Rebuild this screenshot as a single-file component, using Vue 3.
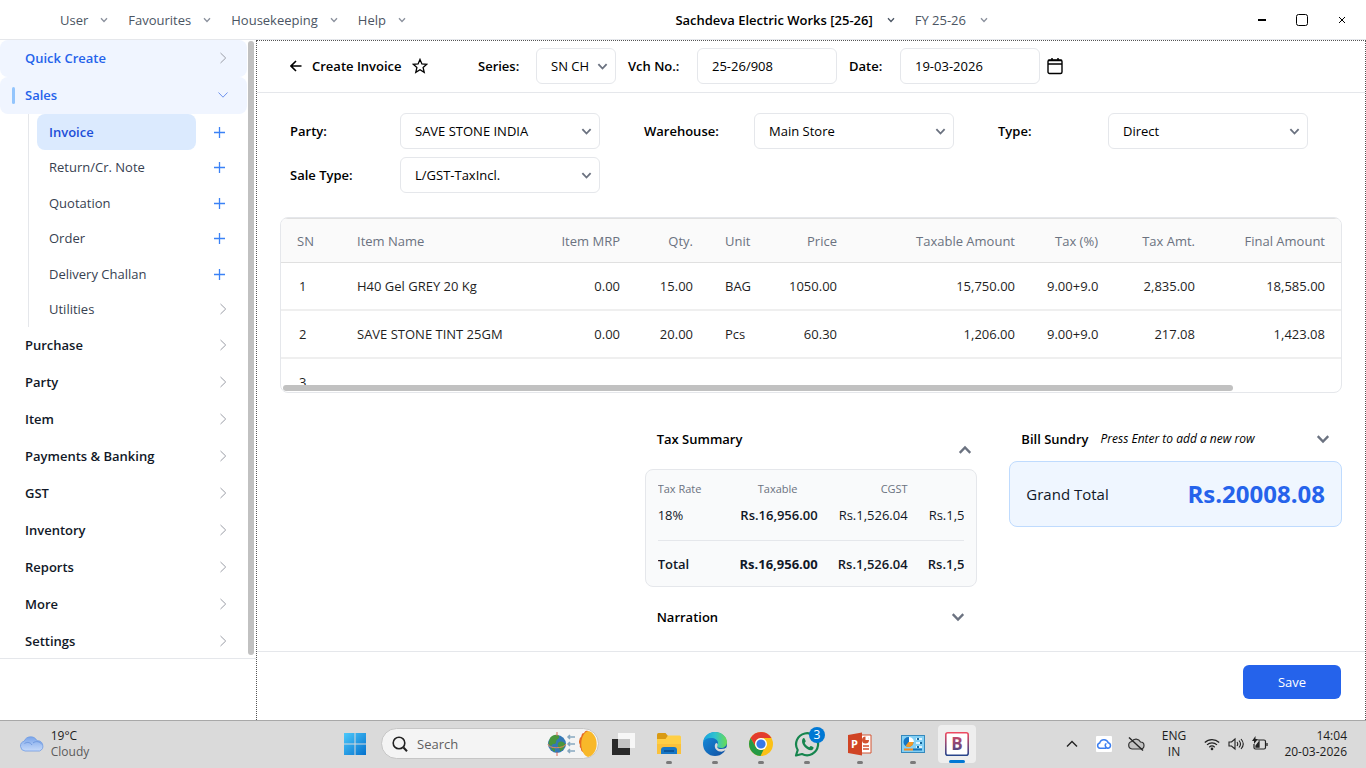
<template>
  <div class="desktop">
    <svg class="symbols" width="0" height="0" aria-hidden="true">
      <symbol id="chevron-down" viewBox="0 0 12 12">
        <path d="M1.5 3.5 6 8.2l4.500-4.700" fill="none" stroke="currentColor" />
      </symbol>
      <symbol id="chevron-up" viewBox="0 0 12 12">
        <path d="M1.500 8.500 6 3.800l4.500 4.700" fill="none" stroke="currentColor" />
      </symbol>
      <symbol id="chevron-right" viewBox="0 0 12 12">
        <path d="M3.500 1 8.700 6l-5.200 5" fill="none" stroke="currentColor" />
      </symbol>
    </svg>

    <header class="titlebar">
      <nav class="menu">
        <button v-for="item in menus" :key="item" type="button" class="menu-btn">
          {{ item }}
          <svg class="chev-small"><use href="#chevron-down" /></svg>
        </button>
      </nav>
      <div class="company">
        <button type="button" class="menu-btn company-btn">
          Sachdeva Electric Works [25-26]
          <svg class="chev-small"><use href="#chevron-down" /></svg>
        </button>
        <button type="button" class="menu-btn">
          FY 25-26
          <svg class="chev-small"><use href="#chevron-down" /></svg>
        </button>
      </div>
      <div class="window-btns">
        <button type="button" aria-label="Minimize">
          <svg width="14" height="14" viewBox="0 0 14 14"><path d="M3 7h8" stroke="#000" stroke-width="2" /></svg>
        </button>
        <button type="button" aria-label="Maximize">
          <svg width="14" height="14" viewBox="0 0 14 14">
            <rect x="1.500" y="1.500" width="11" height="11" rx="2" fill="none" stroke="#000" />
          </svg>
        </button>
        <button type="button" aria-label="Close">
          <svg width="14" height="14" viewBox="0 0 14 14"><path d="m4 4 6 6m0-6-6 6" stroke="#000" /></svg>
        </button>
      </div>
    </header>

    <div class="workspace">
      <aside class="sidebar">
        <div class="side-scroll">
          <nav class="side-nav">
            <button type="button" class="side-item highlighted">
              Quick Create
              <svg class="chev"><use href="#chevron-right" /></svg>
            </button>
            <button type="button" class="side-item highlighted opened">
              Sales
              <svg class="chev"><use href="#chevron-down" /></svg>
            </button>
            <div class="sub-menu">
              <div v-for="item in salesItems" :key="item" class="sub-row">
                <button
                  type="button"
                  class="sub-item"
                  :class="{ active: item === activeItem }"
                  @click="activeItem = item"
                >
                  {{ item }}
                </button>
                <svg v-if="item === 'Utilities'" class="chev"><use href="#chevron-right" /></svg>
                <button v-else type="button" class="add-btn" :aria-label="'Add ' + item">
                  <svg width="12" height="12" viewBox="0 0 12 12">
                    <path d="M6.500 1v11M1 6.500h11" stroke="#3b82f6" stroke-width="1.300" />
                  </svg>
                </button>
              </div>
            </div>
            <button v-for="item in sections" :key="item" type="button" class="side-item">
              {{ item }}
              <svg class="chev"><use href="#chevron-right" /></svg>
            </button>
          </nav>
          <div class="side-thumb"></div>
        </div>
      </aside>

      <main class="content">
        <div class="page-header">
          <button type="button" class="icon-btn" aria-label="Back">
            <svg width="12" height="12" viewBox="0 0 12 12">
              <path d="M6 1 1 6l5 5M1 6h10.500" fill="none" stroke="#000" stroke-width="1.600" />
            </svg>
          </button>
          <h1>Create Invoice</h1>
          <button type="button" class="icon-btn star" aria-label="Favourite">
            <svg width="16" height="16" viewBox="0 0 16 16">
              <path
                d="m8 1.400 1.900 4.500 4.900.4-3.700 3.200 1.100 4.800L8 11.800l-4.200 2.500 1.100-4.800L1.200 6.300l4.900-.4z"
                fill="none"
                stroke="#000"
                stroke-width="1.300"
              />
            </svg>
          </button>
          <label for="series" class="series-label">Series:</label>
          <div class="select-box series-box">
            <select id="series" v-model="series">
              <option>SN CH</option>
            </select>
            <svg class="chev-select"><use href="#chevron-down" /></svg>
          </div>
          <label for="vch" class="vch-label">Vch No.:</label>
          <input id="vch" v-model="vchNo" type="text" />
          <label for="date" class="date-label">Date:</label>
          <input id="date" v-model="date" type="text" />
          <button type="button" class="icon-btn calendar" aria-label="Pick date">
            <svg width="16" height="18" viewBox="0 0 16 18">
              <rect x="1" y="3" width="14" height="13.500" rx="1.500" fill="none" stroke="#000" stroke-width="1.400" />
              <path d="M1 3.500h14M1 7h14M5 1v3M11 1v3" stroke="#000" stroke-width="1.500" />
            </svg>
          </button>
        </div>

        <div class="page-body">
          <div class="form-grid">
            <div v-for="field in fields" :key="field.id" class="field">
              <label :for="field.id">{{ field.label }}</label>
              <div class="select-box">
                <select :id="field.id" v-model="field.value">
                  <option>{{ field.value }}</option>
                </select>
                <svg class="chev-select"><use href="#chevron-down" /></svg>
              </div>
            </div>
          </div>

          <div class="items-box">
            <div class="items-scroll">
              <table class="items">
                <colgroup>
                  <col v-for="col in columns" :key="col.key" :style="{ width: col.width }" />
                </colgroup>
                <thead>
                  <tr>
                    <th v-for="col in columns" :key="col.key" :class="col.align">{{ col.title }}</th>
                  </tr>
                </thead>
                <tbody>
                  <tr v-for="row in rows" :key="row.sn">
                    <td v-for="col in columns" :key="col.key" :class="[col.align, col.key]">{{ row[col.key] }}</td>
                  </tr>
                </tbody>
              </table>
            </div>
            <div class="items-track"><div class="items-thumb"></div></div>
          </div>

          <div class="summary-grid">
            <div></div>
            <section>
              <div class="section-head tax-head">
                <h2>Tax Summary</h2>
                <button type="button" class="icon-btn" aria-label="Collapse tax summary">
                  <svg class="chev-big"><use href="#chevron-up" /></svg>
                </button>
              </div>
              <div class="tax-card">
                <div class="tax-clip">
                  <table class="tax">
                    <thead>
                      <tr>
                        <th>Tax Rate</th>
                        <th class="center">Taxable</th>
                        <th class="right">CGST</th>
                        <th></th>
                      </tr>
                    </thead>
                    <tbody>
                      <tr>
                        <td>18%</td>
                        <td><span class="amount medium">Rs.16,956.00</span></td>
                        <td><span class="amount">Rs.1,526.04</span></td>
                        <td><span class="amount">Rs.1,526.04</span></td>
                      </tr>
                    </tbody>
                    <tfoot>
                      <tr>
                        <td>Total</td>
                        <td><span class="amount strong">Rs.16,956.00</span></td>
                        <td><span class="amount">Rs.1,526.04</span></td>
                        <td><span class="amount">Rs.1,526.04</span></td>
                      </tr>
                    </tfoot>
                  </table>
                </div>
              </div>
              <div class="section-head narration-head">
                <h2>Narration</h2>
                <button type="button" class="icon-btn" aria-label="Expand narration">
                  <svg class="chev-big"><use href="#chevron-down" /></svg>
                </button>
              </div>
            </section>
            <section>
              <div class="section-head sundry-head">
                <h2>Bill Sundry</h2>
                <em>Press Enter to add a new row</em>
                <button type="button" class="icon-btn" aria-label="Expand bill sundry">
                  <svg class="chev-big"><use href="#chevron-down" /></svg>
                </button>
              </div>
              <div class="grand-total">
                <span>Grand Total</span>
                <strong>Rs.20008.08</strong>
              </div>
            </section>
          </div>
        </div>

        <footer class="page-footer">
          <button type="button" class="save-btn">Save</button>
        </footer>
      </main>
    </div>

    <footer class="taskbar">
      <button type="button" class="weather">
        <svg width="26" height="20" viewBox="0 0 26 20">
          <defs>
            <linearGradient id="cloud" x1="0" y1="0" x2="0" y2="1">
              <stop offset="0" stop-color="#7ba5ea" />
              <stop offset="1" stop-color="#c6dafa" />
            </linearGradient>
          </defs>
          <path
            d="M6 17a5 5 0 0 1-.8-9.800A7 7 0 0 1 18 6.800 5.300 5.300 0 0 1 20.500 17z"
            fill="url(#cloud)"
            stroke="#6f9ae2"
            stroke-width=".8"
          />
          <path d="M5.500 9.500c3-2 6-1 7.500 1.500M14 9c3-2.500 7-1.500 9 1.500" fill="none" stroke="#7099df" />
        </svg>
        <span class="weather-text">
          <span>19°C</span>
          <span class="muted">Cloudy</span>
        </span>
      </button>

      <div class="task-apps">
        <button type="button" class="start" aria-label="Start">
          <svg width="24" height="24" viewBox="0 0 24 24">
            <defs>
              <linearGradient id="win" x1="0" y1="0" x2="1" y2="1">
                <stop offset="0" stop-color="#4cc9fb" />
                <stop offset="1" stop-color="#0471cd" />
              </linearGradient>
            </defs>
            <path d="M1 1h10.500v10.500H1zM12.500 1H23v10.500H12.500zM1 12.500h10.500V23H1zM12.500 12.500H23V23H12.500z" fill="url(#win)" />
          </svg>
        </button>

        <div class="search">
          <svg width="16" height="16" viewBox="0 0 16 16">
            <path d="M11.500 11.500 15 15.300" stroke="#222" stroke-width="2" />
            <circle cx="7" cy="7" r="5.800" fill="none" stroke="#222" stroke-width="1.600" />
          </svg>
          <input type="text" placeholder="Search" aria-label="Search" />
          <svg width="52" height="28" viewBox="0 0 52 28">
            <circle cx="11" cy="14" r="9" fill="#3478b5" />
            <path
              d="M4 8c3-4 8-4 9-2 1 3-3 3-3 6s-3 1-4 3-3 0-3.500-2zM12 13c3-3 6-1 7 1-1 5-3 7-5 7 0-3-3-4-2-8zM5 17l4 2v3c-2-1-4-3-4-5z"
              fill="#4a963d"
            />
            <path d="M2 14c0 5 16 5 18 0" fill="none" stroke="#e98955" />
            <path d="M11 2v4M11 22v4" stroke="#d96b5b" />
            <path
              d="M22 7h7M22 14h7M22 21h7M24 5l-2 2 2 2M24 12l-2 2 2 2M24 19l-2 2 2 2"
              fill="none"
              stroke="#87a8c0"
              stroke-width="1.500"
            />
            <path
              d="M42 1c-3-1-3 1-4 2-3 0-2 3-3 4-2 1-1 3-2 4 0 2 0 2 1 4-1 2 1 3 1 4 0 3 2 2 3 4 1 2 2 3 5 3z"
              fill="#e56a22"
            />
            <path d="M42 1c11 2 12 23 0 26-9-3-9-23 0-26z" fill="#f8b829" />
          </svg>
        </div>

        <button type="button" class="app" aria-label="Task view">
          <svg width="24" height="24" viewBox="0 0 24 24">
            <path d="M1 7h18v16H1z" fill="#292929" />
            <path d="M7 1h17v15H7z" fill="#f7f7f7" />
            <path d="M7 7h12v9H7z" fill="#c4c4c4" />
          </svg>
        </button>
        <button type="button" class="app running" aria-label="File Explorer">
          <svg width="26" height="26" viewBox="0 0 26 26">
            <path d="M1 3.500Q1 2 2.500 2h7L12 5v3H1z" fill="#d99a13" />
            <path d="M1 8h8.500L12 4.500h11.500Q25 4.500 25 6v17H1z" fill="#ffcf45" />
            <path d="M1 13h24v10H1z" fill="#fac13b" />
            <path d="M5 23v-4q0-3 3-3h10q3 0 3 3v4z" fill="#1676c5" />
            <path d="M8 20h10" stroke="#0b559a" stroke-width="2" />
          </svg>
        </button>
        <button type="button" class="app running" aria-label="Edge">
          <svg width="26" height="26" viewBox="0 0 26 26">
            <defs>
              <linearGradient id="edge-top" x1="0" y1="0" x2="1" y2="0">
                <stop offset="0" stop-color="#16a3df" />
                <stop offset=".5" stop-color="#2fc2cf" />
                <stop offset="1" stop-color="#69dc50" />
              </linearGradient>
              <linearGradient id="edge-low" x1="0" y1="0" x2="1" y2="1">
                <stop offset="0" stop-color="#1590df" />
                <stop offset="1" stop-color="#114c9e" />
              </linearGradient>
            </defs>
            <circle cx="13" cy="13" r="12" fill="url(#edge-low)" />
            <path
              d="M1.200 11C2 5 7 1 13 1c7 0 12 5 12 10 0 4-3 6-6 6-2 0-4-1-4-2s1-1 1-3c0-3-3-5-7-5-4 0-6.500 1.500-7.800 4z"
              fill="url(#edge-top)"
            />
            <path d="M14 12c1.500 0 2 1 1.500 2.500S15 18 19 18c3 0 5-1 6-2l-1 3c-2 1-4 2-6 1.500-4-.5-7-5-4-8.500z" fill="#dadada" />
          </svg>
        </button>
        <button type="button" class="app running" aria-label="Chrome">
          <svg width="26" height="26" viewBox="0 0 26 26">
            <circle cx="13" cy="13" r="12" fill="#fbc116" />
            <path d="M2.600 7A12 12 0 0 1 23.400 7H13a6 6 0 0 0-5.200 9z" fill="#e33b2e" />
            <path d="M2.600 7 7.800 16a6 6 0 0 0 8 2.300L12.500 25A12 12 0 0 1 2.600 7z" fill="#259a45" />
            <circle cx="13" cy="13" r="6" fill="#fff" />
            <circle cx="13" cy="13" r="4.600" fill="#3879e8" />
          </svg>
        </button>
        <button type="button" class="app running" aria-label="WhatsApp">
          <svg width="26" height="26" viewBox="0 0 26 26">
            <path
              d="M2 24.500 3.700 19A11 11 0 1 1 8 23z"
              fill="none"
              stroke="#16854e"
              stroke-width="2.200"
              stroke-linejoin="round"
            />
            <path
              d="M8.500 8c1-1.500 2-1 2.300 0l.9 2c.2.800-.7 1.500-1 2 1 2 2.500 3.500 4.500 4.200.8-.4 1-1.400 1.800-1.200l2.200 1c1 .7 0 2.500-1.200 3C13.500 20.500 6 13 8.500 8z"
              fill="#16854e"
            />
          </svg>
          <span class="badge">3</span>
        </button>
        <button type="button" class="app wide running" aria-label="PowerPoint">
          <svg width="26" height="26" viewBox="0 0 26 26">
            <path d="M13 4h11v18H13z" fill="#fff" stroke="#d35230" />
            <circle cx="18.500" cy="9" r="3.500" fill="#d35230" />
            <path d="M18.500 9V5A4 4 0 0 1 22 9z" fill="#fff" />
            <path d="M16 15h6M16 18h6" stroke="#d35230" stroke-width="1.500" />
            <path d="M1 4 15 1.500v23L1 22z" fill="#d04424" />
            <text x="4" y="17" class="ppt-letter">P</text>
          </svg>
        </button>
        <button type="button" class="app running" aria-label="Control Panel">
          <svg width="26" height="26" viewBox="0 0 26 26">
            <rect x="1.500" y="4.500" width="23" height="17" fill="#83d0f5" stroke="#3689bc" />
            <circle cx="8.500" cy="11" r="5" fill="#1576c4" />
            <path d="M9 11V6a5 5 0 0 1 5 5z" fill="#fff" />
            <path d="M8.500 11h5a5 5 0 0 1-8 4z" fill="#f39a26" />
            <path d="M16 8h6M16 12h6M16 16h6" stroke="#fff" stroke-width="1.500" />
            <path d="M18 7v2M21 11v2M18 15v2" stroke="#16679c" stroke-width="2" />
            <path d="M4 18.500h9" stroke="#f58b20" stroke-width="2" />
            <path d="M13 18.500h9" stroke="#1674b8" stroke-width="2" />
          </svg>
        </button>
        <button type="button" class="app current" aria-label="Billing">
          <svg width="26" height="26" viewBox="0 0 26 26">
            <defs>
              <linearGradient id="brand" x1="0" y1="0" x2="0" y2="1">
                <stop offset="0" stop-color="#ee4a60" />
                <stop offset="1" stop-color="#28458c" />
              </linearGradient>
            </defs>
            <rect x="1.800" y="1.800" width="22.400" height="22.400" rx="2" fill="#fff" stroke="url(#brand)" stroke-width="1.600" />
            <text x="13" y="19" text-anchor="middle" class="brand-letter" fill="url(#brand)">B</text>
          </svg>
        </button>
      </div>

      <div class="tray">
        <button type="button" class="tray-btn" aria-label="Show hidden icons">
          <svg width="12" height="12" viewBox="0 0 12 12">
            <path d="m1 8.500 5-5 5 5" fill="none" stroke="#222" stroke-width="1.400" />
          </svg>
        </button>
        <button type="button" class="tray-btn" aria-label="Cloud backup">
          <svg width="16" height="16" viewBox="0 0 16 16">
            <rect width="16" height="16" rx="1" fill="#fff" />
            <path
              d="M10 12.300H4a2.700 2.700 0 0 1-.3-5.300 4.400 4.400 0 0 1 8.500-.2 2.800 2.800 0 0 1 0 5.500c-2 0-2.700-1.300-3-3 0-1 .5-1.500 1.300-1.500"
              fill="none"
              stroke="#3d7ff0"
              stroke-width="1.500"
            />
          </svg>
        </button>
        <button type="button" class="tray-btn" aria-label="OneDrive">
          <svg width="18" height="16" viewBox="0 0 18 16">
            <path d="M5 13a3.800 3.800 0 0 1-.2-7.500A5 5 0 0 1 13.500 6a3.500 3.500 0 0 1 0 7z" fill="#c2c2c2" stroke="#333" stroke-width="1.200" />
            <path d="m2 1.500 14 13" stroke="#222" stroke-width="1.400" />
          </svg>
        </button>
        <button type="button" class="lang"><span>ENG</span><span>IN</span></button>
        <button type="button" class="quick" aria-label="Network, volume and battery">
          <svg width="16" height="16" viewBox="0 0 16 16">
            <path
              d="M.8 6.500a10.300 10.300 0 0 1 14.400 0M3 8.900a7.200 7.200 0 0 1 10 0M5.300 11.200a4 4 0 0 1 5.400 0"
              fill="none"
              stroke="#222"
              stroke-width="1.200"
            />
            <circle cx="8" cy="12.900" r="1.300" fill="#222" />
          </svg>
          <svg width="16" height="16" viewBox="0 0 16 16">
            <path
              d="M1 6h2.500L7 3v10l-3.500-3H1zM9 6q1.500 2 0 4M11 4.500q3 3.500 0 7M13 3q4.500 5 0 10"
              fill="none"
              stroke="#222"
              stroke-width="1.100"
            />
          </svg>
          <svg width="16" height="16" viewBox="0 0 16 16">
            <path d="M5.500 4H12q1.500 0 1.500 1.500v6Q13.500 13 12 13H3.500Q2 13 2 11.500V8" fill="none" stroke="#222" stroke-width="1.200" />
            <path d="M4 10l3-4v5H4zM15 7v3" fill="#222" stroke="#222" stroke-width="1.300" />
            <path d="M3.500 0 0 5h2v3l4-5H3.500z" fill="#222" />
          </svg>
        </button>
        <button type="button" class="clock"><span>14:04</span><span>20-03-2026</span></button>
      </div>
    </footer>
  </div>
</template>

<script setup>
import { ref } from 'vue';

const menus = ['User', 'Favourites', 'Housekeeping', 'Help'];
const salesItems = ['Invoice', 'Return/Cr. Note', 'Quotation', 'Order', 'Delivery Challan', 'Utilities'];
const sections = [
  'Purchase',
  'Party',
  'Item',
  'Payments & Banking',
  'GST',
  'Inventory',
  'Reports',
  'More',
  'Settings',
];

const activeItem = ref('Invoice');
const series = ref('SN CH');
const vchNo = ref('25-26/908');
const date = ref('19-03-2026');

const fields = ref([
  { id: 'party', label: 'Party:', value: 'SAVE STONE INDIA' },
  { id: 'warehouse', label: 'Warehouse:', value: 'Main Store' },
  { id: 'type', label: 'Type:', value: 'Direct' },
  { id: 'sale-type', label: 'Sale Type:', value: 'L/GST-TaxIncl.' },
]);

const columns = [
  { key: 'sn', title: 'SN', width: '60px', align: 'left' },
  { key: 'name', title: 'Item Name', width: 'auto', align: 'left' },
  { key: 'mrp', title: 'Item MRP', width: '100px', align: 'right' },
  { key: 'qty', title: 'Qty.', width: '73px', align: 'right' },
  { key: 'unit', title: 'Unit', width: '56px', align: 'left' },
  { key: 'price', title: 'Price', width: '88px', align: 'right' },
  { key: 'taxable', title: 'Taxable Amount', width: '178px', align: 'right' },
  { key: 'tax', title: 'Tax (%)', width: '83px', align: 'right' },
  { key: 'taxAmt', title: 'Tax Amt.', width: '97px', align: 'right' },
  { key: 'final', title: 'Final Amount', width: '130px', align: 'right' },
];

const rows = ref([
  {
    sn: 1,
    name: 'H40 Gel GREY 20 Kg',
    mrp: '0.00',
    qty: '15.00',
    unit: 'BAG',
    price: '1050.00',
    taxable: '15,750.00',
    tax: '9.00+9.0',
    taxAmt: '2,835.00',
    final: '18,585.00',
  },
  {
    sn: 2,
    name: 'SAVE STONE TINT 25GM',
    mrp: '0.00',
    qty: '20.00',
    unit: 'Pcs',
    price: '60.30',
    taxable: '1,206.00',
    tax: '9.00+9.0',
    taxAmt: '217.08',
    final: '1,423.08',
  },
  { sn: 3 },
]);
</script>

<style>
body {
  margin: 0;
  background: #fff;
}
</style>

<style scoped>
.desktop {
  display: flex;
  flex-direction: column;
  height: 100vh;
  overflow: hidden;
  font-family: 'Open Sans', 'Noto Sans', sans-serif;
  font-size: 13px;
  line-height: 18px;
  color: #000;
}

.desktop * {
  box-sizing: border-box;
}

.symbols {
  position: absolute;
}

button,
input,
select {
  font: inherit;
  color: inherit;
}

button {
  padding: 0;
  border: 0;
  background: none;
  cursor: pointer;
}

svg {
  flex: none;
}

h1,
h2 {
  margin: 0;
  font-size: 13px;
  font-weight: 600;
}

/* title bar */
.titlebar {
  display: flex;
  align-items: center;
  flex: none;
  height: 40px;
  padding: 0 4px 0 60px;
  border-bottom: 1px solid #e5e7eb;
}

.menu,
.company {
  display: flex;
  gap: 20px;
}

.menu-btn {
  display: flex;
  align-items: center;
  gap: 12px;
  color: #4b5563;
  white-space: nowrap;
}

.chev-small {
  width: 8px;
  height: 8px;
  color: #8b919d;
  stroke-width: 2px;
}

.company {
  margin-left: auto;
  margin-right: 254px;
}

.company .menu-btn {
  gap: 14px;
}

.menu-btn.company-btn {
  color: #000;
  font-weight: 600;
}

.company-btn .chev-small {
  color: #4b5563;
}

.window-btns {
  display: flex;
}

.window-btns button {
  display: flex;
  align-items: center;
  justify-content: center;
  width: 40px;
  height: 38px;
}

/* sidebar */
.workspace {
  display: flex;
  flex: 1;
  min-height: 0;
}

.sidebar {
  flex: none;
  width: 256px;
  padding-bottom: 61px;
}

.side-scroll {
  display: flex;
  height: 100%;
  overflow: hidden;
  border-bottom: 1px solid #e5e7eb;
}

.side-nav {
  width: 247px;
}

.side-thumb {
  width: 6px;
  margin: 1px 0 3px 1px;
  border-radius: 3px;
  background: #c1c1c1;
}

.side-item {
  position: relative;
  display: flex;
  align-items: center;
  justify-content: space-between;
  width: 100%;
  height: 37px;
  padding: 0 18px 2px 25px;
  border-radius: 8px;
  color: #111827;
  font-weight: 600;
}

.highlighted {
  background: #f0f5ff;
  color: #2563eb;
}

.opened::before {
  content: '';
  position: absolute;
  left: 12px;
  top: 10px;
  width: 3px;
  height: 17px;
  border-radius: 2px;
  background: #93c5fd;
}

.chev {
  width: 12px;
  height: 12px;
  color: #9a9da6;
}

.opened .chev {
  color: #6f93ee;
}

.sub-menu {
  display: grid;
  grid-auto-rows: 1fr;
  height: 213px;
  margin-left: 28px;
  padding: 0 18px 0 8px;
  border-left: 1px solid #e5e7eb;
}

.sub-row {
  display: flex;
  align-items: center;
  justify-content: space-between;
}

.sub-item {
  width: 159px;
  height: 100%;
  padding: 0 12px;
  border-radius: 8px;
  text-align: left;
  color: #374151;
}

.sub-item.active {
  background: #dbeafe;
  color: #1d4ed8;
  font-weight: 600;
}

.add-btn {
  display: flex;
  width: 16px;
}

/* invoice page */
.content {
  display: flex;
  flex-direction: column;
  flex: 1;
  min-width: 0;
  border: 1px dotted #555;
  border-bottom: 0;
}

.page-header {
  display: flex;
  align-items: center;
  flex: none;
  height: 52px;
  padding: 0 0 2px 33px;
  border-bottom: 1px solid #e5e7eb;
}

label {
  font-weight: 600;
  white-space: nowrap;
}

.icon-btn {
  display: flex;
}

.page-header h1 {
  width: 100px;
  margin-left: 10px;
  white-space: nowrap;
}

.series-label {
  width: 58px;
  margin-left: 50px;
}

.vch-label {
  width: 69px;
  margin-left: 12px;
}

.date-label {
  width: 51px;
  margin-left: 12px;
}

.calendar {
  margin-left: 7px;
}

input,
select {
  height: 36px;
  padding: 0 14px;
  border: 1px solid #e5e7eb;
  border-radius: 6px;
  background: #fff;
  outline: 0;
}

.page-header input {
  width: 140px;
}

.select-box {
  position: relative;
  width: 200px;
}

.series-box {
  width: 80px;
}

.select-box select {
  width: 100%;
  appearance: none;
}

.chev-select {
  position: absolute;
  right: 8px;
  top: 13px;
  width: 11px;
  height: 11px;
  color: #6b7280;
  stroke-width: 2px;
  pointer-events: none;
}

.page-body {
  flex: 1;
  min-height: 0;
  padding: 20px 23px 0;
}

.form-grid {
  display: grid;
  grid-template-columns: repeat(3, 1fr);
  row-gap: 8px;
  padding-left: 10px;
  margin-right: -10px;
}

.field {
  display: flex;
  align-items: center;
}

.field label {
  width: 110px;
}

/* item rows */
.items-box {
  margin-top: 24px;
  height: 176px;
  overflow: hidden;
  border: 1px solid #e5e7eb;
  border-radius: 8px;
}

.items-scroll {
  height: 167px;
  overflow: hidden;
}

.items {
  width: 100%;
  table-layout: fixed;
  border-collapse: separate;
  border-spacing: 0;
}

.items th,
.items td {
  height: 48px;
  padding: 0 16px;
  overflow: hidden;
  white-space: nowrap;
  border-bottom: 2px solid #efefef;
  color: #1f1f1f;
}

.items th {
  height: 45px;
  border-top: 1px solid #e0e0e0;
  border-bottom: 1px solid #e0e0e0;
  background: #fafafa;
  color: #6b7280;
  font-weight: 500;
}

.items td.sn {
  padding-left: 18px;
}

.left {
  text-align: left;
}

.center {
  text-align: center;
}

.right {
  text-align: right;
}

.items-thumb {
  width: 950px;
  max-width: 90%;
  height: 6px;
  margin-left: 2px;
  border-radius: 3px;
  background: #c1c1c1;
}

/* totals */
.summary-grid {
  display: grid;
  grid-template-columns: repeat(3, minmax(0, 1fr));
  gap: 32px;
  margin-top: 28px;
}

.section-head {
  display: flex;
  align-items: center;
  padding: 0 12px;
}

.section-head .icon-btn {
  margin-left: auto;
}

.tax-head {
  align-items: flex-start;
  height: 48px;
  padding: 9px 5px 0 12px;
}

.tax-head .icon-btn {
  padding-top: 13px;
}

.chev-big {
  width: 14px;
  height: 14px;
  color: #6b7280;
  stroke-width: 2px;
}

.tax-card {
  height: 118px;
  padding: 10px 12px;
  border: 1px solid #e5e7eb;
  border-radius: 8px;
  background: #f9fafb;
}

.tax-clip {
  overflow: hidden;
}

.tax {
  width: 340px;
  table-layout: fixed;
  border-collapse: collapse;
}

.tax th {
  height: 18px;
  padding: 0;
  font-size: 11px;
  font-weight: 400;
  color: #6b7280;
}

.tax th:first-child,
.tax td:first-child {
  width: 80px;
  text-align: left;
}

.tax th:nth-child(2) {
  width: 80px;
}

.tax td {
  height: 42px;
  padding: 0 0 8px;
  color: #111827;
}

.tax tfoot td {
  height: 34px;
  padding: 14px 0 0;
  border-top: 1px solid #e5e7eb;
  font-weight: 600;
}

.amount {
  display: flex;
  justify-content: flex-end;
  overflow: hidden;
}

.amount.medium {
  font-weight: 600;
}

.tax .amount.strong {
  font-weight: 700;
}

.narration-head {
  height: 60px;
}

.sundry-head {
  height: 40px;
  gap: 12px;
  padding-bottom: 4px;
}

.sundry-head h2 {
  white-space: nowrap;
}

.sundry-head em {
  font-size: 12px;
  white-space: nowrap;
}

.grand-total {
  display: flex;
  align-items: center;
  justify-content: space-between;
  height: 66px;
  padding: 0 16px;
  border: 1px solid #bfdbfe;
  border-radius: 8px;
  background: #eff6ff;
  color: #111827;
  font-size: 15px;
  font-weight: 500;
}

.grand-total strong {
  color: #2563eb;
  font-size: 24px;
}

.page-footer {
  display: flex;
  justify-content: flex-end;
  flex: none;
  height: 69px;
  padding: 13px 24px 0;
  border-top: 1px solid #e5e7eb;
}

.save-btn {
  width: 98px;
  height: 34px;
  border-radius: 6px;
  background: #2563eb;
  color: #fff;
  font-weight: 500;
}

/* taskbar */
.taskbar {
  display: flex;
  align-items: center;
  flex: none;
  height: 48px;
  padding: 0 19px 2px 18px;
  border-top: 1px solid #a8a8a8;
  background: #dadada;
  font-size: 12px;
  line-height: 16px;
  color: #1c1c1c;
}

.taskbar button {
  display: flex;
  align-items: center;
  justify-content: center;
}

.weather {
  gap: 6px;
  width: 72px;
}

.weather-text {
  display: flex;
  flex-direction: column;
  text-align: left;
}

.muted {
  color: #5b5b5b;
}

.task-apps {
  display: flex;
  align-items: center;
  margin-left: 246px;
}

.start {
  width: 38px;
}

.search {
  display: flex;
  align-items: center;
  width: 218px;
  height: 31px;
  margin-left: 7px;
  margin-right: 1px;
  padding: 0 0 0 10px;
  border: 1px solid #c6c6c6;
  border-radius: 16px;
  background: #f4f4f4;
}

.search input {
  flex: 1;
  min-width: 0;
  height: 28px;
  padding: 0 9px;
  border: 0;
  background: none;
  font-size: 13px;
}

.search input::placeholder {
  color: #5f5f5f;
}

.app {
  position: relative;
  width: 46px;
  height: 45px;
}

.app.wide {
  width: 60px;
}

.app.running::after,
.app.current::after {
  content: '';
  position: absolute;
  left: 50%;
  bottom: 2px;
  width: 6px;
  height: 3px;
  margin-left: -3px;
  border-radius: 2px;
  background: #7a7a7a;
}

.taskbar .app.current {
  width: 38px;
  height: 38px;
  margin-left: 2px;
  border-radius: 4px;
  background: #eee;
}

.app.current::after {
  bottom: 0;
  width: 16px;
  margin-left: -8px;
  background: #0078d4;
}

.badge {
  position: absolute;
  right: 5px;
  top: 6px;
  width: 16px;
  height: 16px;
  border-radius: 8px;
  background: #0078d4;
  color: #fff;
  text-align: center;
}

.ppt-letter {
  fill: #fff;
  font-size: 11px;
  font-weight: 700;
}

.brand-letter {
  font-size: 17px;
  font-weight: 700;
}

.tray {
  display: flex;
  align-items: center;
  margin-left: auto;
}

.tray-btn {
  width: 32px;
  height: 40px;
}

.taskbar .lang {
  flex-direction: column;
  width: 44px;
}

.quick {
  gap: 8px;
  width: 80px;
}

.taskbar .clock {
  flex-direction: column;
  align-items: flex-end;
  width: 71px;
}
</style>
